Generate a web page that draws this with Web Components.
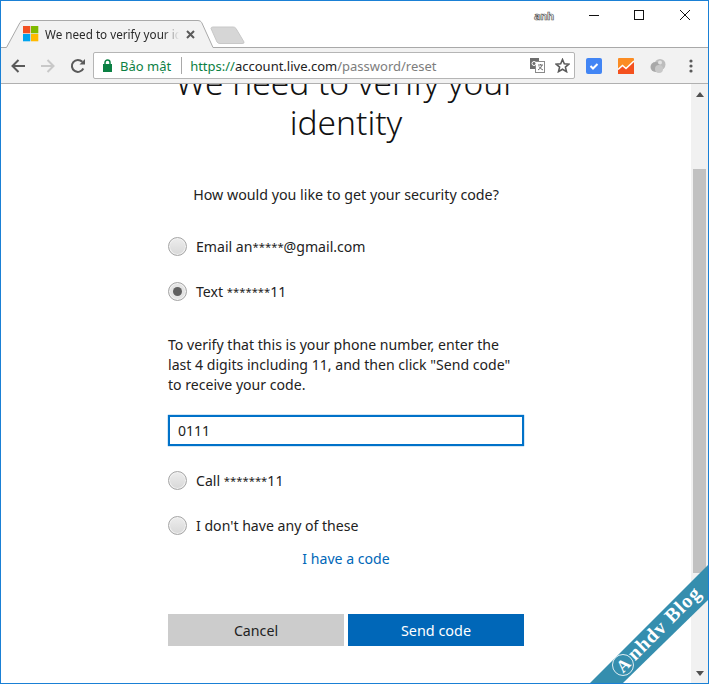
<!DOCTYPE html>
<html lang="vi"><head><meta charset="utf-8"><title>We need to verify your identity</title>
<style>
html,body{margin:0;padding:0;background:#fff}
body{font-family:"Noto Sans","Open Sans",sans-serif;width:709px;height:684px;overflow:hidden}
</style></head><body>
<browser-window>
  <tab-strip slot="strip" title-text="We need to verify your identity" user="anh"></tab-strip>
  <browser-toolbar slot="toolbar"></browser-toolbar>
  <verify-page></verify-page>
</browser-window>
<script>
function def(name, html, init){
  customElements.define(name, class extends HTMLElement{
    constructor(){super();this.attachShadow({mode:'open'}).innerHTML=html;}
    connectedCallback(){ if(init) init.call(this,this.shadowRoot); }
  });
}
def('browser-window',`<style>
:host{display:flex;flex-direction:column;position:relative;box-sizing:border-box;width:709px;height:684px;border:1px solid #1a80d5;background:#fff;overflow:hidden}
.view{flex:1;display:flex;min-height:0}
.content{flex:1;min-width:0;overflow:hidden}
</style>
<slot name="strip"></slot><slot name="toolbar"></slot>
<div class="view"><div class="content"><slot></slot></div><page-scrollbar></page-scrollbar></div>
<ribbon-mark></ribbon-mark>`);

def('tab-strip',`<style>
:host{display:block;height:46px;position:relative;background:#fff}
.tabs{position:absolute;left:0;top:0}
.label{position:absolute;left:44px;top:24px;width:134px;height:18px;overflow:hidden;white-space:nowrap;font:11.700px/18px "Noto Sans",sans-serif;color:#2a2a2a;-webkit-mask-image:linear-gradient(90deg,#000 118px,transparent 134px);mask-image:linear-gradient(90deg,#000 118px,transparent 134px)}
.user{position:absolute;left:533px;top:8px;font:bold 11px/14px "Noto Sans",sans-serif;color:#fff;-webkit-text-stroke:.7px #555;letter-spacing:-.4px}
.ctrl{position:absolute;left:0;top:0}
</style>
<svg class="tabs" width="707" height="47" viewBox="0 0 707 47">
<path d="M0 46.5H5.5L19 21.5Q20.3 19.5 23 19.5H197Q199.5 19.5 200.7 21.5L212 46.5H707" fill="#f2f2f2" stroke="#a9a9a9"/>
<path d="M210 27.5Q210 26 212 26H232Q234 26 235 27.5L243 41Q243.5 42.5 241 42.5H219Q217 42.5 216 41Z" fill="#d6d6d6" stroke="#c8c8c8"/>
<rect x="22" y="25" width="7.3" height="7.3" fill="#f25022"/><rect x="30" y="25" width="7.3" height="7.3" fill="#7fba00"/>
<rect x="22" y="33" width="7.3" height="7.3" fill="#00a4ef"/><rect x="30" y="33" width="7.3" height="7.3" fill="#ffb900"/>
<path d="M186 30L193 37M193 30L186 37" stroke="#5a5a5a" stroke-width="2"/>
</svg>
<span class="label"></span><span class="user"></span>
<svg class="ctrl" width="707" height="46" viewBox="0 0 707 46" style="pointer-events:none">
<path d="M588 14.500H598" stroke="#111" fill="none"/>
<rect x="633.500" y="9.500" width="9" height="9" fill="none" stroke="#111"/>
<path d="M679 9L689 19M689 9L679 19" stroke="#111" fill="none"/>
</svg>`,function(r){r.querySelector('.label').textContent=this.getAttribute('title-text');r.querySelector('.user').textContent=this.getAttribute('user');});

def('browser-toolbar',`<style>
:host{display:flex;align-items:center;box-sizing:border-box;height:37px;background:#f2f2f2;border-bottom:1px solid #b0b0b0;padding:1px 0 0 9px}
svg{display:block;flex:none}
.nav{display:flex;gap:14px;margin-right:7px}
.omni{flex:none;width:482px;height:27px;box-sizing:border-box;background:#fff;border:1px solid #b5b5b5;border-radius:2px;display:flex;align-items:center;padding-left:9px;font:13px/20px "Noto Sans",sans-serif;white-space:nowrap}
.sec{color:#0b8043;margin-left:8px}
.sep{width:1px;height:17px;background:#a9a9a9;margin:0 8px 0 10px}
.s{color:#0b8043}.h{color:#222}.p{color:#7d7d7d}
.url{flex:1;min-width:0}
.ic{display:flex;gap:10px;margin-right:4px}
.ext{display:flex;gap:16px;margin-left:11px;align-items:center}
</style>
<div class="nav">
<svg width="16" height="16" viewBox="0 0 16 16"><path d="M15 8H2.500M8.500 2L2.500 8L8.500 14" fill="none" stroke="#5a5a5a" stroke-width="2"/></svg>
<svg width="16" height="16" viewBox="0 0 16 16"><path d="M1 8H13.500M7.500 2L13.500 8L7.500 14" fill="none" stroke="#c8c8c8" stroke-width="2"/></svg>
<svg width="16" height="16" viewBox="0 0 16 16"><path d="M13.300 10.500A6 6 0 1 1 12.300 3.800" fill="none" stroke="#5a5a5a" stroke-width="2"/><path d="M9.500 6.500H15V1Z" fill="#5a5a5a"/></svg>
</div>
<div class="omni">
<svg width="9" height="13" viewBox="0 0 9 13"><path d="M2 5.500V3.500A2.500 2.500 0 0 1 7 3.500V5.500" fill="none" stroke="#0b8043" stroke-width="1.500"/><rect y="5" width="9" height="8" fill="#0b8043"/></svg>
<span class="sec">Bảo mật</span><span class="sep"></span>
<span class="url"><span class="s">https://</span><span class="h">account.live.com</span><span class="p">/password/reset</span></span>
<span class="ic">
<svg width="15" height="15" viewBox="0 0 15 15"><rect x="0" y="0" width="9" height="11" fill="#6e6e6e"/><rect x="5.500" y="3.500" width="9" height="11" fill="#fff" stroke="#8a8a8a"/><circle cx="4" cy="5.500" r="2" fill="none" stroke="#fff"/><path d="M8 7H13M10.500 6V7M12 7Q11 10.500 8 12M9 8.500Q10.500 11 13 12" fill="none" stroke="#6e6e6e"/></svg>
<svg width="15" height="15" viewBox="0 0 15 15"><path d="M7.500 1.500L9.300 5.700L13.900 6.100L10.400 9.100L11.500 13.600L7.500 11.200L3.500 13.600L4.600 9.100L1.100 6.100L5.700 5.700Z" fill="none" stroke="#5a5a5a" stroke-width="1.600"/></svg>
</span>
</div>
<div class="ext">
<svg width="16" height="16" viewBox="0 0 16 16"><rect width="16" height="16" rx="2" fill="#4285f4"/><path d="M4.500 8L7 10.500L11.500 6" fill="none" stroke="#fff" stroke-width="2"/></svg>
<svg width="16" height="16" viewBox="0 0 16 16"><rect width="16" height="16" rx="1" fill="#fb8c23"/><path d="M0 16V11L4.500 7.500L8 10.500L16 3V16Z" fill="#f4511e"/><path d="M0 11.500L4.500 7.500L8 10.500L16 3" fill="none" stroke="#fff" stroke-width="1.600"/></svg>
<svg width="16" height="16" viewBox="0 0 16 16"><circle cx="10" cy="6.500" r="5.500" fill="#bdbdbd"/><circle cx="5.500" cy="9" r="5" fill="#a8a8a8"/><circle cx="9" cy="11" r="4" fill="#c8c8c8"/><circle cx="10" cy="4.500" r="2" fill="#e2e2e2"/></svg>
<svg width="4" height="14" viewBox="0 0 4 14" style="margin-left:7px;margin-right:-1px"><circle cx="2" cy="2" r="1.600" fill="#5a5a5a"/><circle cx="2" cy="7" r="1.600" fill="#5a5a5a"/><circle cx="2" cy="12" r="1.600" fill="#5a5a5a"/></svg>
</div>`);

def('page-scrollbar',`<style>
:host{flex:none;width:17px;background:#f1f1f1;display:flex;flex-direction:column;align-items:center}
.a{height:20px;display:flex;align-items:center;justify-content:center;flex:none}
.track{flex:1;width:100%;padding-top:65px;box-sizing:border-box;display:flex;flex-direction:column;min-height:0}
.thumb{height:404px;width:13px;background:#c1c1c1;margin:0 auto;flex:none}
</style>
<div class="a"><svg width="8" height="5"><path d="M4 0L8 5H0Z" fill="#505050"/></svg></div>
<div class="track"><div class="thumb"></div></div>
<div class="a"><svg width="8" height="5"><path d="M0 0H8L4 5Z" fill="#505050"/></svg></div>`);

def('ribbon-mark',`<style>
:host{position:absolute;right:0;bottom:0;width:118px;height:118px;pointer-events:none}
svg{display:block}
text{font:bold 20px "Liberation Serif",serif;fill:#fff;letter-spacing:.9px}
.c{font:bold 17px "Liberation Serif",serif}
</style>
<svg width="118" height="118" viewBox="0 0 118 118">
<path d="M0 118L118 0V35L33 118Z" fill="#358eae"/>
<g transform="translate(33 100) rotate(-45)"><circle cx="0" cy="0" r="10.500" fill="none" stroke="#fff" stroke-width=".8"/><text class="c" x="-6" y="6">A</text><text x="11" y="6">nhdv Blog</text></g>
</svg>`);

def('radio-option',`<style>
:host{display:flex;align-items:center;gap:9px;height:20px;font-size:14.100px;color:#222}
.r{width:19px;height:19px;box-sizing:border-box;border-radius:50%;border:1px solid #a6a6a6;background:linear-gradient(#ededed,#d8d8d8);box-shadow:inset 0 0 0 1px #f2f2f2;display:flex;align-items:center;justify-content:center;flex:none}
:host([checked]) .r::after{content:"";width:9px;height:9px;border-radius:50%;background:#606060}
:host([checked]) .r{background:#e4e4e4}
.t{padding-top:1px}
</style><span class="r"></span><span class="t"><slot></slot></span>`);

def('ms-button',`<style>
:host{display:flex;align-items:center;justify-content:center;height:32px;background:#ccc;color:#222;font-size:14.200px;flex:1}
:host([primary]){background:#0067b8;color:#fff;font-size:14.400px}
</style><slot></slot>`);

def('verify-page',`<style>
:host{display:flex;flex-direction:column;align-items:center;height:598px;overflow:hidden;color:#222;font-family:"Noto Sans",sans-serif}
.col{width:356px;flex:none;margin-top:-22px;display:flex;flex-direction:column}
h1{margin:0;font:300 33.500px/40px "Noto Sans",sans-serif;color:#111;text-align:center}
.q{margin:43px 0 0;font-size:14.250px;line-height:20px;text-align:center}
.st{font-size:11.300px;vertical-align:1px}
.opt1{margin-top:31px}.opt2{margin-top:25px}
.info{margin:34px 0 0;font-size:14.100px;line-height:20px}
.input{margin-top:20px;height:31px;box-sizing:border-box;border:2px solid #0072c9;box-shadow:0 0 1px #0072c9;padding:0 8px;font-size:14px;line-height:27px;color:#222}
.opt3{margin-top:24px}.opt4{margin-top:25px}
.link{margin-top:14px;text-align:center;color:#0067b8;font-size:14.100px;line-height:20px}
.btns{margin-top:45px;display:flex;gap:4px}
</style>
<div class="col">
<h1>We need to verify your identity</h1>
<p class="q">How would you like to get your security code?</p>
<radio-option class="opt1">Email an<span class="st">*****</span>@gmail.com</radio-option>
<radio-option class="opt2" checked>Text <span class="st">*******</span>11</radio-option>
<p class="info">To verify that this is your phone number, enter the last 4 digits including 11, and then click "Send code" to receive your code.</p>
<div class="input">0111</div>
<radio-option class="opt3">Call <span class="st">*******</span>11</radio-option>
<radio-option class="opt4">I don't have any of these</radio-option>
<div class="link">I have a code</div>
<div class="btns"><ms-button>Cancel</ms-button><ms-button primary>Send code</ms-button></div>
</div>`);
</script>
</body></html>
